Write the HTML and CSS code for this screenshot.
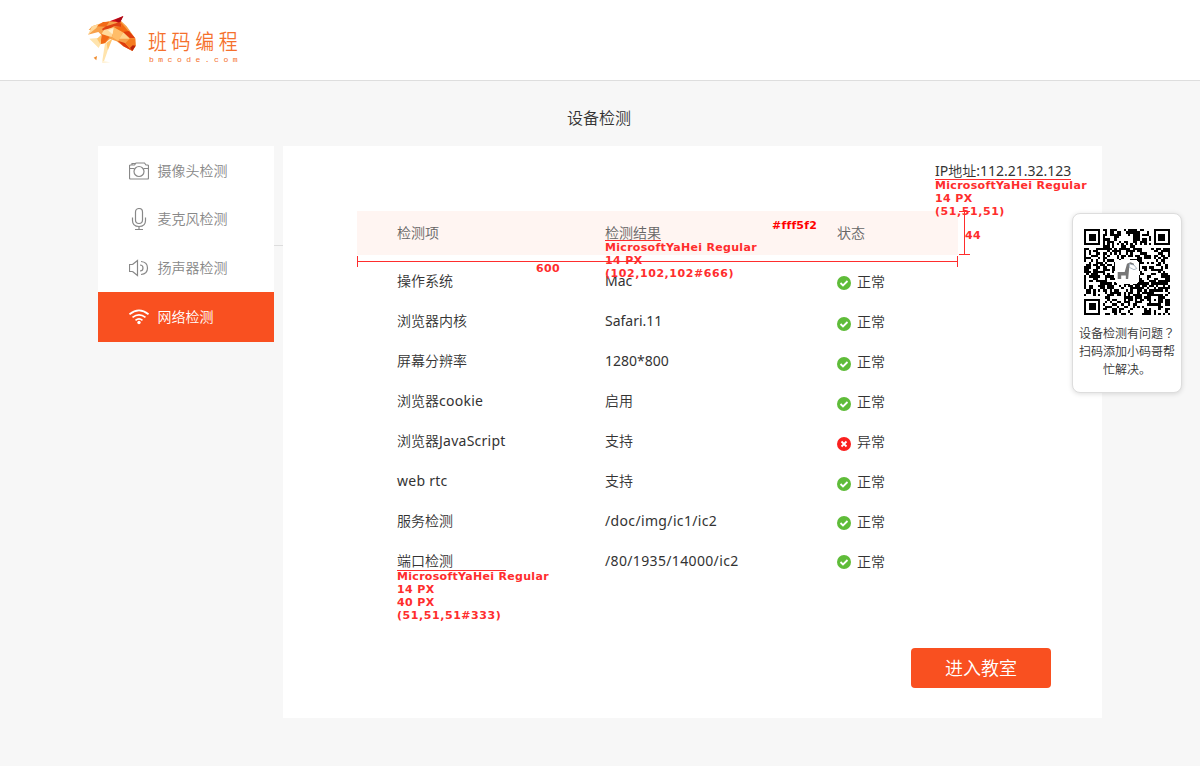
FILE: index.html
```html
<!DOCTYPE html>
<html lang="zh-CN">
<head>
<meta charset="utf-8">
<title>设备检测</title>
<link rel="stylesheet" href="styles.css">
</head>
<body>
<header class="header">
  <svg class="horse" viewBox="0 0 168 162">
    <path fill="#f7a14a" d="M24 43L44 36 74 28 108 24 128 43 153 78 155 101 145 117 118 103 98 88 78 81 63 94 50 96 53 70 43 60 12 68 24 54 14 54z"/>
    <path fill="#d80d18" d="M77 28L118 12 107 34 95 29z"/>
    <path fill="#a90b18" d="M93 24L118 12 107 34z"/>
    <path fill="#f26a17" d="M37 43L57 30 76 29 66 44zM53 65L77 75 63 93 50 96z"/>
    <path fill="#df4312" d="M66 43L96 34 109 29 113 45 90 43zM54 51L66 43 90 43 59 59z"/>
    <path fill="#ffd99b" d="M24 43L44 36 37 48 12 68zM59 54L90 46 83 75 53 66z"/>
    <path fill="#fff0cf" d="M72 55L90 49 87 68z"/>
    <path fill="#ffbd68" d="M90 46L117 61 103 87 84 75z"/>
    <path fill="#f36a13" d="M109 29L136 61 117 61 90 46 113 45z"/>
    <path fill="#ffd38b" d="M118 61L137 80 106 80z"/>
    <path fill="#df3d0d" d="M117 60L135 57 153 78 138 79zM101 86L123 93 145 117 118 103z"/>
    <path fill="#f57c20" d="M137 80L154 79 155 101 145 117 124 94z"/>
    <path fill="#ba250d" d="M146 100L155 101 145 117 138 108z"/>
    <path fill="#ffe4ad" d="M16 80L49 77 50 96 44 108zM63 94L73 91 70 119 60 148 55 146z"/>
    <path fill="#ffc66f" d="M39 80L52 68 50 98zM68 92L86 79 71 116z"/>
    <path fill="#ef8b2d" d="M29 137L39 132 37 145z"/>
    <path fill="#fff0cf" d="M54 147L79 151 55 153z"/>
  </svg>
  <div class="brand"><span class="brand-name">班码编程</span><span class="brand-site">bmcode.com</span></div>
</header>
<h1 class="title">设备检测</h1>
<div class="layout">
  <nav class="menu">
    <a class="item item-first"><svg class="icon" viewBox="0 0 20 22"><path d="M3 4.500v-1h3v1M1.500 5h4l1.500-2h8.500l1.500 2h1.500q1 0 1 1v11.500q0 1.500-1 1.500h-17q-1 0-1-1.500V6q0-1 1-1zM.5 8.500h5M14.500 8.500h5"/><circle cx="10" cy="11.500" r="5"/></svg><span>摄像头检测</span></a>
    <a class="item"><svg class="icon" viewBox="0 0 20 22"><rect x="6.500" y="0.500" width="7" height="15" rx="3.500"/><path d="M3.500 9.500v3q0 6 6.500 6t6.500-6v-3M10 18.500v3M6 21.500h8"/></svg><span>麦克风检测</span></a>
    <a class="item"><svg class="icon" viewBox="0 0 20 20"><path d="M3.500 6.500H.5v7h3M3.500 6.500L8.500 2.500v15L3.500 13.500M11 7q3 0 3 3t-3 3M12 3.500q6.500.5 6.500 6.500T12 16.500"/></svg><span>扬声器检测</span></a>
    <a class="item item-active"><svg class="icon icon-wifi" viewBox="0 0 20 20"><path d="M.5 7.300Q10-.5 19.500 7.300M3.500 10.300q6.500-5 13 0M6.500 13.300q3.500-2.700 7 0"/><circle class="dot" cx="10" cy="15.500" r="1.700"/></svg><span>网络检测</span></a>
  </nav>
  <div class="gutter"></div>
  <main class="panel">
    <div class="ip"><span class="latin">IP</span>地址<span class="latin">:112.21.32.123</span></div>
    <div class="table">
      <div class="row head"><span>检测项</span><span>检测结果</span><span>状态</span></div>
      <div class="row"><span>操作系统</span><span class="latin">Mac</span><span class="status"><svg class="badge" viewBox="0 0 14 14"><circle cx="7" cy="7" r="7"/><path d="M3.500 7l2.500 2.500 4.500-4.500"/></svg>正常</span></div>
      <div class="row"><span>浏览器内核</span><span class="latin">Safari.11</span><span class="status"><svg class="badge low" viewBox="0 0 14 14"><circle cx="7" cy="7" r="7"/><path d="M3.500 7l2.500 2.500 4.500-4.500"/></svg>正常</span></div>
      <div class="row"><span>屏幕分辨率</span><span class="latin">1280*800</span><span class="status"><svg class="badge low" viewBox="0 0 14 14"><circle cx="7" cy="7" r="7"/><path d="M3.500 7l2.500 2.500 4.500-4.500"/></svg>正常</span></div>
      <div class="row"><span>浏览器<span class="latin word">cookie</span></span><span>启用</span><span class="status"><svg class="badge low" viewBox="0 0 14 14"><circle cx="7" cy="7" r="7"/><path d="M3.500 7l2.500 2.500 4.500-4.500"/></svg>正常</span></div>
      <div class="row"><span>浏览器<span class="latin word">JavaScript</span></span><span>支持</span><span class="status"><svg class="badge low bad" viewBox="0 0 14 14"><circle cx="7" cy="7" r="7"/><path d="M4.500 4.500l5 5M9.500 4.500l-5 5"/></svg>异常</span></div>
      <div class="row"><span class="latin word">web rtc</span><span>支持</span><span class="status"><svg class="badge low" viewBox="0 0 14 14"><circle cx="7" cy="7" r="7"/><path d="M3.500 7l2.500 2.500 4.500-4.500"/></svg>正常</span></div>
      <div class="row"><span>服务检测</span><span class="latin path">/doc/img/ic1/ic2</span><span class="status"><svg class="badge" viewBox="0 0 14 14"><circle cx="7" cy="7" r="7"/><path d="M3.500 7l2.500 2.500 4.500-4.500"/></svg>正常</span></div>
      <div class="row"><span>端口检测</span><span class="latin path">/80/1935/14000/ic2</span><span class="status"><svg class="badge high" viewBox="0 0 14 14"><circle cx="7" cy="7" r="7"/><path d="M3.500 7l2.500 2.500 4.500-4.500"/></svg>正常</span></div>
    </div>
    <button class="enter">进入教室</button>
    <div class="note note-ip">MicrosoftYaHei Regular<br><span class="px">14 PX</span><br><span class="rgb">(51,51,51)</span></div>
    <div class="note note-head">MicrosoftYaHei Regular<br><span class="px">14 PX</span><br><span class="rgb">(102,102,102#666)</span></div>
    <div class="note note-row">MicrosoftYaHei Regular<br><span class="px">14 PX</span><br><span class="px">40 PX</span><br><span class="rgb">(51,51,51#333)</span></div>
    <div class="note note-color">#fff5f2</div>
    <div class="note note-width">600</div>
    <div class="note note-height">44</div>
    <div class="measure-x"></div>
    <div class="measure-y"></div>
  </main>
</div>
<aside class="help">
  <svg class="qr" viewBox="0 0 37 37" shape-rendering="crispEdges"><path id="modules"/><rect x="13.500" y="13.500" width="10" height="10" rx="1" fill="#fff"/><g shape-rendering="geometricPrecision"><path class="zebra" d="M14.500 18.500h3l1-3.500 1.500-.7 1.500.7v1h-2l-.5 5.500h-1V20h-2v1.500h-1.500z"/><path class="muzzle" d="M19.500 15l2 .5 1.200 1.500-1.200.5-2-1z"/></g></svg>
  <p class="help-text">设备检测有问题<span class="mark" lang="zh-TW">？</span><br>扫码添加小码哥帮<br>忙解决。</p>
</aside>
<script src="qr.js"></script>
</body>
</html>
```
FILE: styles.css
```css
* { box-sizing: border-box; }
body { margin: 0; height: 766px; background: #f7f7f7; color: #333; font: 350 14px/20px "Noto Sans", "Noto Sans CJK SC", sans-serif; }
html { background: #fff; height: 768px; overflow: hidden; }
.header { height: 81px; background: #fff; border-bottom: 1px solid #dedede; padding: 12px 0 0 84px; display: flex; }
.horse { width: 56px; height: 54px; }
.brand { display: flex; flex-direction: column; margin: 14px 0 0 8px; color: #f5702c; }
.brand-name { font: 350 21px/28px "Noto Sans CJK SC", sans-serif; letter-spacing: 5.200px; transform: scaleX(.9); transform-origin: 0 0; white-space: nowrap; }
.brand-site { font: 8px/10px "Liberation Mono", monospace; letter-spacing: 4.500px; margin: 1px 0 0 1px; }
.title { margin: 27px 0 0; padding-right: 2px; text-align: center; font-size: 16px; line-height: 20px; font-weight: 350; }
.layout { display: flex; margin: 18px 0 0 98px; align-items: flex-start; }
.menu { width: 176px; height: 196px; background: #fff; display: flex; flex-direction: column; }
.item { height: 48.670px; padding-left: 31px; display: flex; align-items: center; gap: 8.500px; color: #888; }
.item-first { padding-top: 1px; }
.item-active { height: 50px; background: #f95020; color: #fff; }
.icon { width: 20px; height: 22px; fill: none; stroke: #888; stroke-width: 1.200; }
.icon-wifi { stroke: #fff; stroke-width: 1.700; }
.dot { fill: #fff; stroke: none; }
.gutter { width: 9px; height: 100px; border-bottom: 1px solid #ddd; }
.panel { position: relative; width: 819px; height: 572px; background: #fff; padding: 15px 0 0 74px; }
.ip { width: 138px; margin-left: 578px; white-space: nowrap; }
.latin { font-weight: 400; }
.word { letter-spacing: 0.250px; }
.path { letter-spacing: 0.350px; }
.table { width: 601px; margin-top: 30px; }
.row { height: 40px; display: grid; grid-template-columns: 208px 232px 1fr; padding-left: 40px; align-items: center; }
.head { height: 44px; background: #fff5f2; color: #666; margin-bottom: 6px; }
.status { display: flex; align-items: center; gap: 6px; padding-top: 2px; }
.badge { width: 14px; height: 14px; margin-top: 2px; fill: #5fbc39; }
.badge path { fill: none; stroke: #fff; stroke-width: 1.800; }
.badge.low { margin-top: 4px; }
.badge.high { margin-top: 0; }
.badge.bad { fill: #fa201f; }
.enter { display: block; width: 140px; height: 40px; margin: 67px 0 0 554px; border: 0; border-radius: 4px; background: #f95020; color: #fff; font: 350 18px/38px "Noto Sans CJK SC", sans-serif; padding: 0 0 2px; }
.note { position: absolute; white-space: nowrap; font: bold 11px/13px "DejaVu Sans", sans-serif; color: #ff2d2d; letter-spacing: 0.300px; }
.px { letter-spacing: 0.400px; }
.rgb { letter-spacing: 0.560px; }
.note-ip { left: 652px; top: 33px; }
.note-head { left: 322px; top: 95px; }
.note-head::before, .note-ip::before, .note-row::before { content: ""; position: absolute; left: 0; top: -1px; height: 1px; width: 56px; background: #ff2d2d; }
.note-ip::before { width: 136px; top: 0; }
.note-row { left: 114px; top: 424px; }
.note-row::before { width: 109px; top: 0; }
.note-color { left: 489px; top: 73px; color: #f00; letter-spacing: 0.200px; }
.note-width { left: 253px; top: 116px; }
.note-height { left: 682px; top: 83px; }
.measure-x { position: absolute; left: 74px; top: 110px; width: 601px; height: 11px; border: solid #ff2d2d; border-width: 0 1px; background: linear-gradient(#ff2d2d, #ff2d2d) 0 5px / 100% 1px no-repeat; }
.measure-y { position: absolute; left: 676px; top: 65px; width: 11px; height: 44px; border: solid #ff2d2d; border-width: 1px 0; background: linear-gradient(#ff2d2d, #ff2d2d) 5px 0 / 1px 100% no-repeat; }
.help { position: absolute; left: 1072px; top: 213px; width: 110px; height: 180px; background: #fff; border: 1px solid #ddd; border-radius: 8px; box-shadow: 0 1px 5px #0002; padding: 15px 0 0; text-align: center; }
.qr { display: block; width: 86px; height: 86px; margin-left: 11px; }
.zebra { fill: #777; }
.muzzle { fill: #fff; stroke: #89a; stroke-width: .3; }
.help-text { margin: 9px -5px 0; font-size: 12px; line-height: 18px; }
.mark { font-family: "Noto Sans CJK TC", sans-serif; }
```
FILE: qr.js
```js
var size = 37, seed = 20177, d = "";
function finder(x, y, cx, cy, r) {
  var m = Math.max(Math.abs(x - cx), Math.abs(y - cy));
  return m > r ? null : r === 4 ? (m === 3 || m < 2) : m !== 1;
}
for (var y = 0; y < size; y++) {
  for (var x = 0; x < size; x++) {
    seed = (seed * 1103515245 + 12345) % 2147483648;
    var on = seed / 2147483648 < 0.52;
    var marks = [finder(x, y, 3, 3, 4), finder(x, y, 33, 3, 4), finder(x, y, 3, 33, 4), finder(x, y, 30, 30, 2)];
    if (x === 6 || y === 6) on = (x + y) % 2 === 0;
    marks.forEach(function (m) { if (m !== null) on = m; });
    if (on) d += "M" + x + " " + y + "h1v1h-1z";
  }
}
document.getElementById("modules").setAttribute("d", d);
```
